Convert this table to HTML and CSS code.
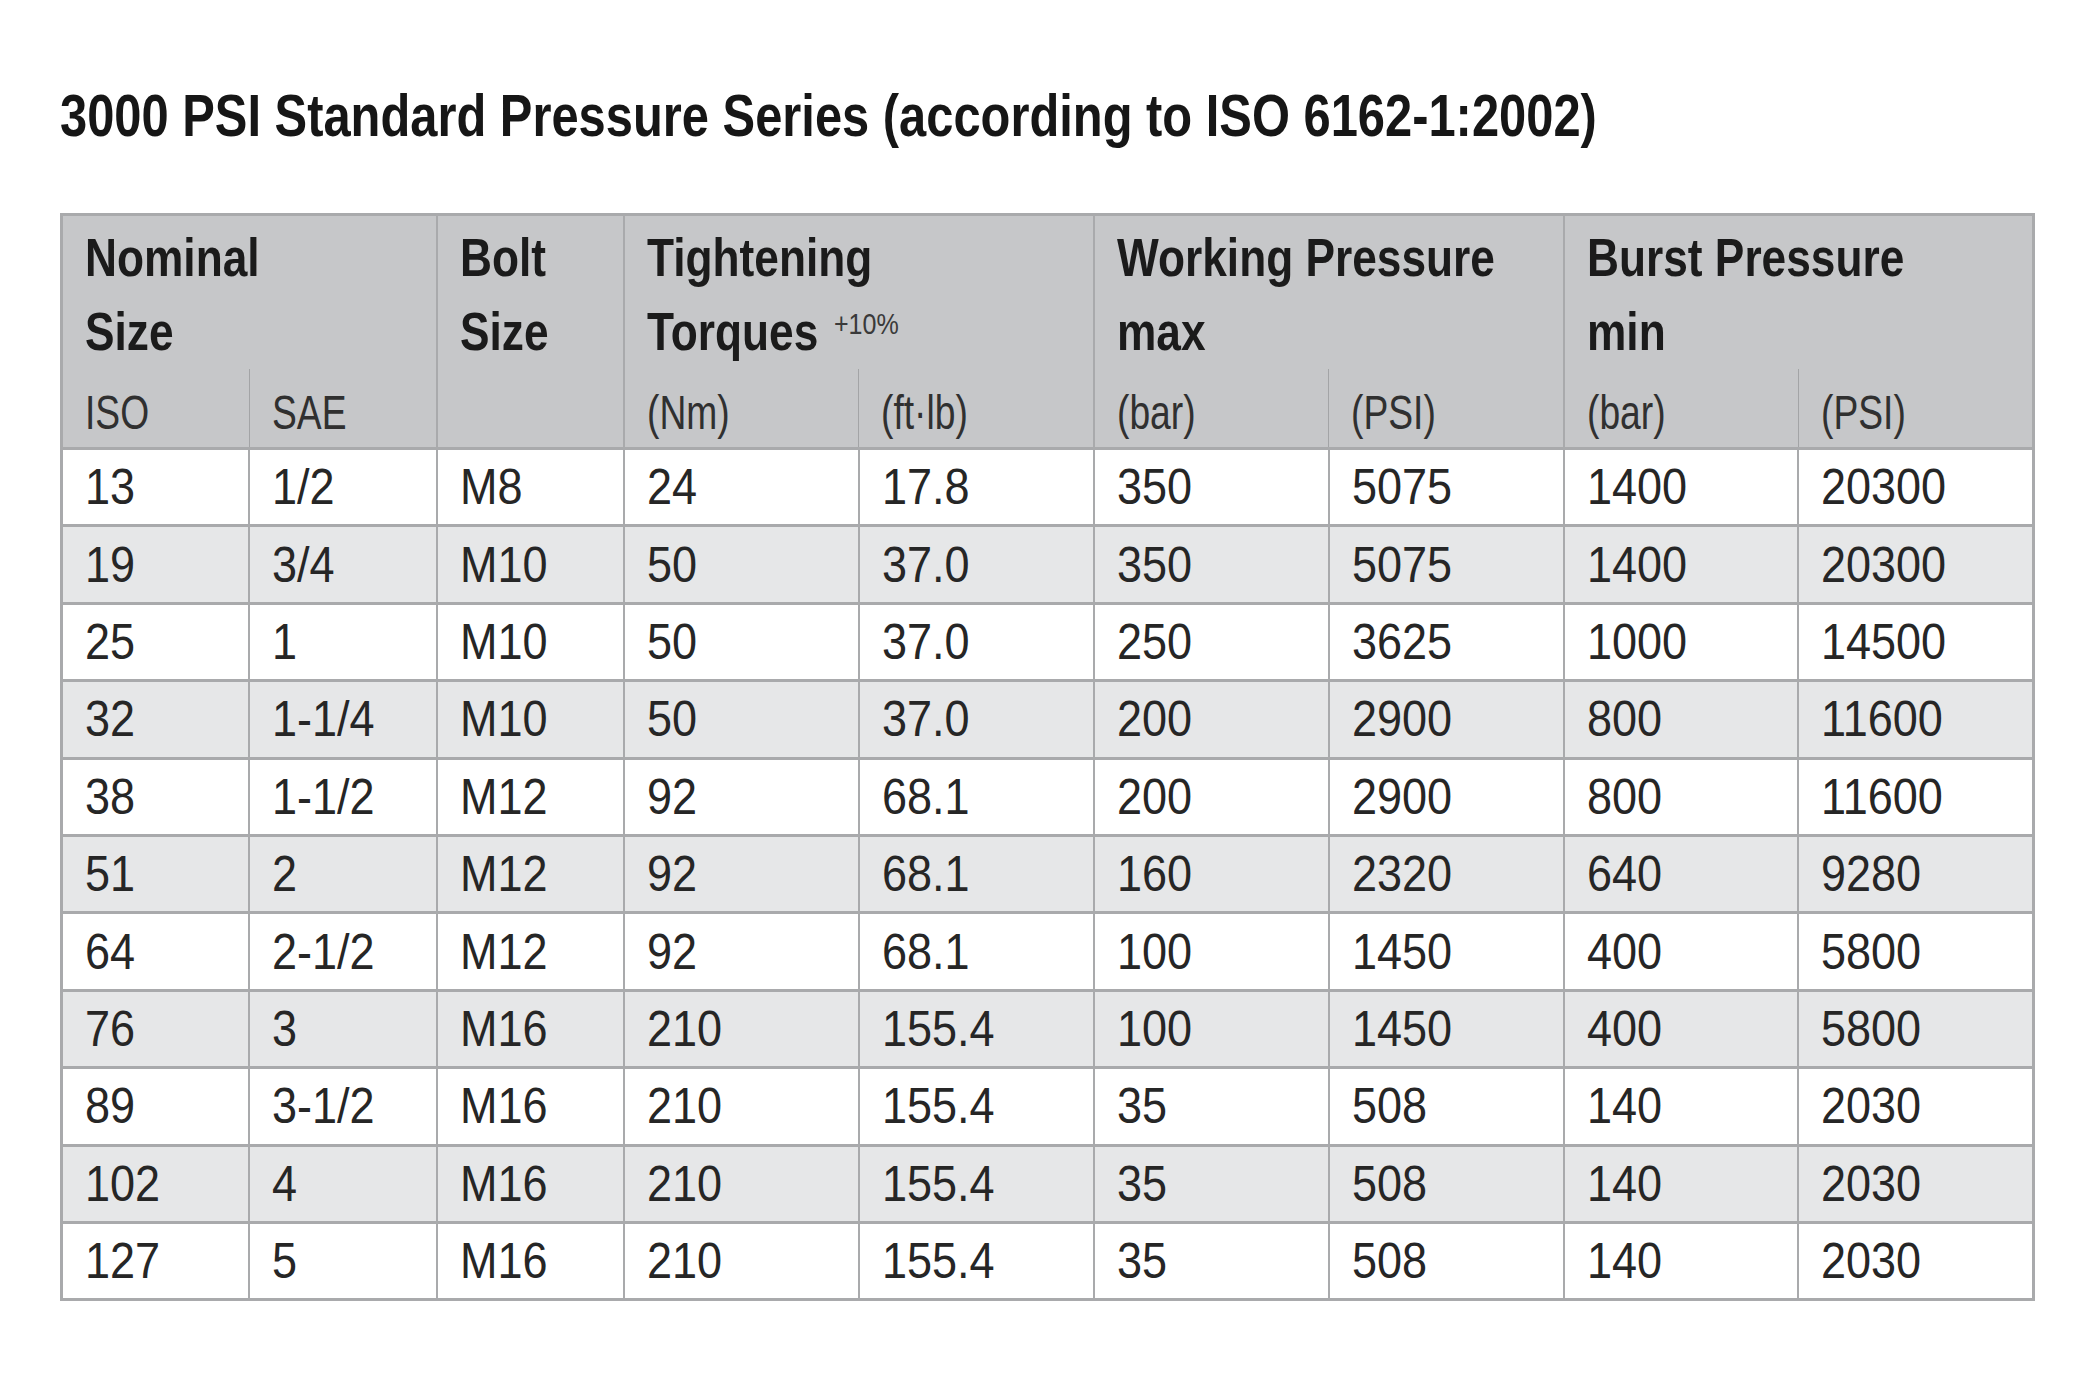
FILE: index.html
```html
<!DOCTYPE html>
<html lang="en">
<head>
<meta charset="utf-8">
<title>3000 PSI Standard Pressure Series</title>
<link rel="stylesheet" href="styles.css">
</head>
<body>
<main class="page">
  <h1 class="title"><span class="cond">3000 PSI Standard Pressure Series (according to ISO 6162-1:2002)</span></h1>
  <table class="spec">
    <colgroup>
      <col class="c-narrow"><col class="c-narrow"><col class="c-narrow">
      <col class="c-wide"><col class="c-wide"><col class="c-wide"><col class="c-wide"><col class="c-wide"><col class="c-wide">
    </colgroup>
    <thead>
      <tr class="h-main">
        <th colspan="2"><span class="cond">Nominal<br>Size</span></th>
        <th rowspan="2" class="h-bolt"><span class="cond">Bolt<br>Size</span></th>
        <th colspan="2"><span class="cond">Tightening<br>Torques <span class="tol">+10%</span></span></th>
        <th colspan="2"><span class="cond">Working Pressure<br>max</span></th>
        <th colspan="2"><span class="cond">Burst Pressure<br>min</span></th>
      </tr>
      <tr class="h-sub">
        <th class="first"><span class="sub">ISO</span></th>
        <th class="second"><span class="sub">SAE</span></th>
        <th class="first"><span class="sub">(Nm)</span></th>
        <th class="second"><span class="sub">(ft·lb)</span></th>
        <th class="first"><span class="sub">(bar)</span></th>
        <th class="second"><span class="sub">(PSI)</span></th>
        <th class="first"><span class="sub">(bar)</span></th>
        <th class="second"><span class="sub">(PSI)</span></th>
      </tr>
    </thead>
    <tbody>
      <tr><td><span class="v">13</span></td><td><span class="v">1/2</span></td><td><span class="v">M8</span></td><td><span class="v">24</span></td><td><span class="v">17.8</span></td><td><span class="v">350</span></td><td><span class="v">5075</span></td><td><span class="v">1400</span></td><td><span class="v">20300</span></td></tr>
      <tr><td><span class="v">19</span></td><td><span class="v">3/4</span></td><td><span class="v">M10</span></td><td><span class="v">50</span></td><td><span class="v">37.0</span></td><td><span class="v">350</span></td><td><span class="v">5075</span></td><td><span class="v">1400</span></td><td><span class="v">20300</span></td></tr>
      <tr><td><span class="v">25</span></td><td><span class="v">1</span></td><td><span class="v">M10</span></td><td><span class="v">50</span></td><td><span class="v">37.0</span></td><td><span class="v">250</span></td><td><span class="v">3625</span></td><td><span class="v">1000</span></td><td><span class="v">14500</span></td></tr>
      <tr><td><span class="v">32</span></td><td><span class="v">1-1/4</span></td><td><span class="v">M10</span></td><td><span class="v">50</span></td><td><span class="v">37.0</span></td><td><span class="v">200</span></td><td><span class="v">2900</span></td><td><span class="v">800</span></td><td><span class="v">11600</span></td></tr>
      <tr><td><span class="v">38</span></td><td><span class="v">1-1/2</span></td><td><span class="v">M12</span></td><td><span class="v">92</span></td><td><span class="v">68.1</span></td><td><span class="v">200</span></td><td><span class="v">2900</span></td><td><span class="v">800</span></td><td><span class="v">11600</span></td></tr>
      <tr><td><span class="v">51</span></td><td><span class="v">2</span></td><td><span class="v">M12</span></td><td><span class="v">92</span></td><td><span class="v">68.1</span></td><td><span class="v">160</span></td><td><span class="v">2320</span></td><td><span class="v">640</span></td><td><span class="v">9280</span></td></tr>
      <tr><td><span class="v">64</span></td><td><span class="v">2-1/2</span></td><td><span class="v">M12</span></td><td><span class="v">92</span></td><td><span class="v">68.1</span></td><td><span class="v">100</span></td><td><span class="v">1450</span></td><td><span class="v">400</span></td><td><span class="v">5800</span></td></tr>
      <tr><td><span class="v">76</span></td><td><span class="v">3</span></td><td><span class="v">M16</span></td><td><span class="v">210</span></td><td><span class="v">155.4</span></td><td><span class="v">100</span></td><td><span class="v">1450</span></td><td><span class="v">400</span></td><td><span class="v">5800</span></td></tr>
      <tr><td><span class="v">89</span></td><td><span class="v">3-1/2</span></td><td><span class="v">M16</span></td><td><span class="v">210</span></td><td><span class="v">155.4</span></td><td><span class="v">35</span></td><td><span class="v">508</span></td><td><span class="v">140</span></td><td><span class="v">2030</span></td></tr>
      <tr><td><span class="v">102</span></td><td><span class="v">4</span></td><td><span class="v">M16</span></td><td><span class="v">210</span></td><td><span class="v">155.4</span></td><td><span class="v">35</span></td><td><span class="v">508</span></td><td><span class="v">140</span></td><td><span class="v">2030</span></td></tr>
      <tr><td><span class="v">127</span></td><td><span class="v">5</span></td><td><span class="v">M16</span></td><td><span class="v">210</span></td><td><span class="v">155.4</span></td><td><span class="v">35</span></td><td><span class="v">508</span></td><td><span class="v">140</span></td><td><span class="v">2030</span></td></tr>
    </tbody>
  </table>
</main>
</body>
</html>
```

FILE: styles.css
```css
html, body {
  margin: 0;
  padding: 0;
  background: #ffffff;
}

.page {
  padding: 87px 0 0 60px;
  font-family: "Liberation Sans", Arial, sans-serif;
  color: #222222;
}

/* condensed face emulation: Liberation Sans squeezed horizontally */
.cond {
  display: inline-block;
  white-space: nowrap;
  transform: scaleX(0.835);
  transform-origin: 0 0;
}

.sub {
  display: inline-block;
  white-space: nowrap;
  transform: scaleX(0.76);
  transform-origin: 0 0;
}

.title {
  margin: 0 0 67px 0;
  font-weight: 700;
  font-size: 59px;
  line-height: 59px;
  color: #161616;
  white-space: nowrap;
}

.title .cond {
  transform: scaleX(0.828);
}

.spec {
  border-collapse: collapse;
  table-layout: fixed;
  width: 1972px;
  border: 3px solid #a9aaac;
}

.c-narrow { width: 187.5px; }
.c-wide { width: 234.9px; }

.spec th {
  background: #c6c7c9;
  text-align: left;
  vertical-align: top;
  padding: 0 0 0 22px;
  border-left: 2px solid #a9aaac;
  border-right: 2px solid #a9aaac;
  overflow: visible;
}

.h-main th {
  font-weight: 700;
  font-size: 53px;
  line-height: 74px;
  color: #1b1b1b;
  height: 148px;
  padding-top: 5px;
}

.tol {
  font-weight: 400;
  font-size: 30px;
  color: #3a3a3a;
  vertical-align: 16px;
  line-height: 1;
  margin-left: 4px;
}

.h-sub th {
  font-weight: 400;
  font-size: 49px;
  line-height: 49px;
  color: #303030;
  height: 68px;
  vertical-align: bottom;
  padding-bottom: 10px;
}

.h-sub th.first {
  border-right: 1px solid #a3a4a6;
}

.h-sub th.second {
  border-left: 1px solid #a3a4a6;
}

.spec td {
  font-size: 50px;
  line-height: 50px;
  color: #262626;
  height: 74.4px;
  padding: 0 0 0 22px;
  vertical-align: middle;
  border: 2px solid #a9aaac;
  border-top-width: 3px;
  border-bottom-width: 3px;
  background: #ffffff;
  white-space: nowrap;
}

.v {
  display: inline-block;
  transform: scaleX(0.9);
  transform-origin: 0 50%;
}

.spec tbody tr:nth-child(even) td {
  background: #e6e7e8;
}
```
